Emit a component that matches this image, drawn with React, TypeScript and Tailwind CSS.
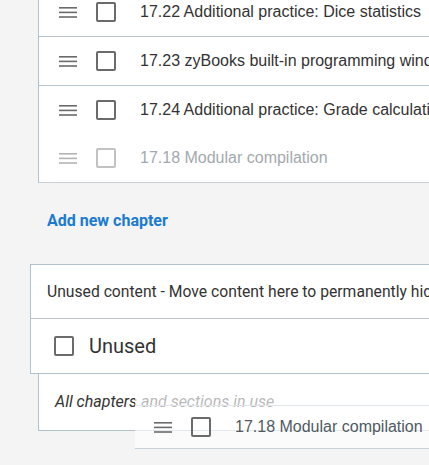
import React from 'react';

type Tone = 'normal' | 'faded';

function DragHandle({ tone = 'normal' }: { tone?: Tone }) {
  const color = tone === 'faded' ? '#b4b4b4' : '#6b6b6b';
  return (
    <svg width="18" height="11" viewBox="0 0 18 11" className="shrink-0">
      <rect x="0" y="0" width="18" height="1.6" fill={color} />
      <rect x="0" y="4.6" width="18" height="1.6" fill={color} />
      <rect x="0" y="9.2" width="18" height="1.6" fill={color} />
    </svg>
  );
}

function Box({ tone = 'normal' }: { tone?: Tone }) {
  return (
    <span
      className={`block w-5 h-5 shrink-0 rounded-[2px] border-2 ${
        tone === 'faded' ? 'border-[#c2c2c2]' : 'border-[#6b6b6b]'
      }`}
    />
  );
}

const sections = [
  { label: '17.22 Additional practice: Dice statistics', border: true },
  { label: '17.23 zyBooks built-in programming window', border: true },
  { label: '17.24 Additional practice: Grade calculation', border: false },
];

export default function App() {
  return (
    <div className="relative w-[429px] h-[465px] overflow-hidden bg-[#f4f4f4] font-['Roboto',sans-serif]">
      {/* Chapter sections */}
      <div className="ml-[38px] mt-[-12px] bg-white border-l border-b border-l-[#b3c1cb] border-b-[#c6d1d9]">
        {sections.map((s) => (
          <div
            key={s.label}
            className={`h-12 flex items-center pl-5 whitespace-nowrap ${
              s.border ? 'border-b border-[#b7c4ce] h-[49px]' : ''
            }`}
          >
            <DragHandle />
            <span className="ml-[19px]">
              <Box />
            </span>
            <span className="ml-6 text-[16px] text-[#333] font-['Liberation_Sans',Arial,sans-serif]">
              {s.label}
            </span>
          </div>
        ))}
        {/* drop placeholder */}
        <div className="h-12 flex items-center pl-5 whitespace-nowrap">
          <DragHandle tone="faded" />
          <span className="ml-[19px]">
            <Box tone="faded" />
          </span>
          <span className="ml-6 text-[16px] text-[#a3a9ae] font-['Liberation_Sans',Arial,sans-serif]">
            17.18 Modular compilation
          </span>
        </div>
      </div>

      <div className="ml-[47px] mt-[26px] leading-6 text-[16px] font-bold text-[#1a7bd0]">
        Add new chapter
      </div>

      {/* Unused content */}
      <div className="ml-[30px] mt-[31px] bg-white border-l border-t border-b border-[#b3c1cb]">
        <div className="h-[54px] flex items-center pl-4 whitespace-nowrap text-[15.7px] text-[#333] border-b border-[#b7c4ce]">
          Unused content - Move content here to permanently hide it from students
        </div>
        <div className="h-[54px] flex items-center pl-[23px]">
          <Box />
          <span className="ml-[15px] text-[20px] text-[#333]">Unused</span>
        </div>
      </div>
      <div className="ml-[38px] h-[57px] bg-white border-l border-b border-[#b3c1cb] flex items-center pl-4 text-[16px] italic text-[#333]">
        All chapters and sections in use
      </div>

      {/* item being dragged */}
      <div className="absolute left-[135px] top-[390px] w-[320px] h-[59px] bg-white/65 border-b border-[#c6d1d9]">
        <div className="h-[16px] border-b border-[#dfe5ea]" />
        <div className="h-[42px] flex items-center pl-[19px] whitespace-nowrap">
          <DragHandle />
          <span className="ml-[19px]">
            <Box />
          </span>
          <span className="ml-6 text-[16px] text-[#4f5a63] font-['Liberation_Sans',Arial,sans-serif]">
            17.18 Modular compilation
          </span>
        </div>
      </div>
    </div>
  );
}
